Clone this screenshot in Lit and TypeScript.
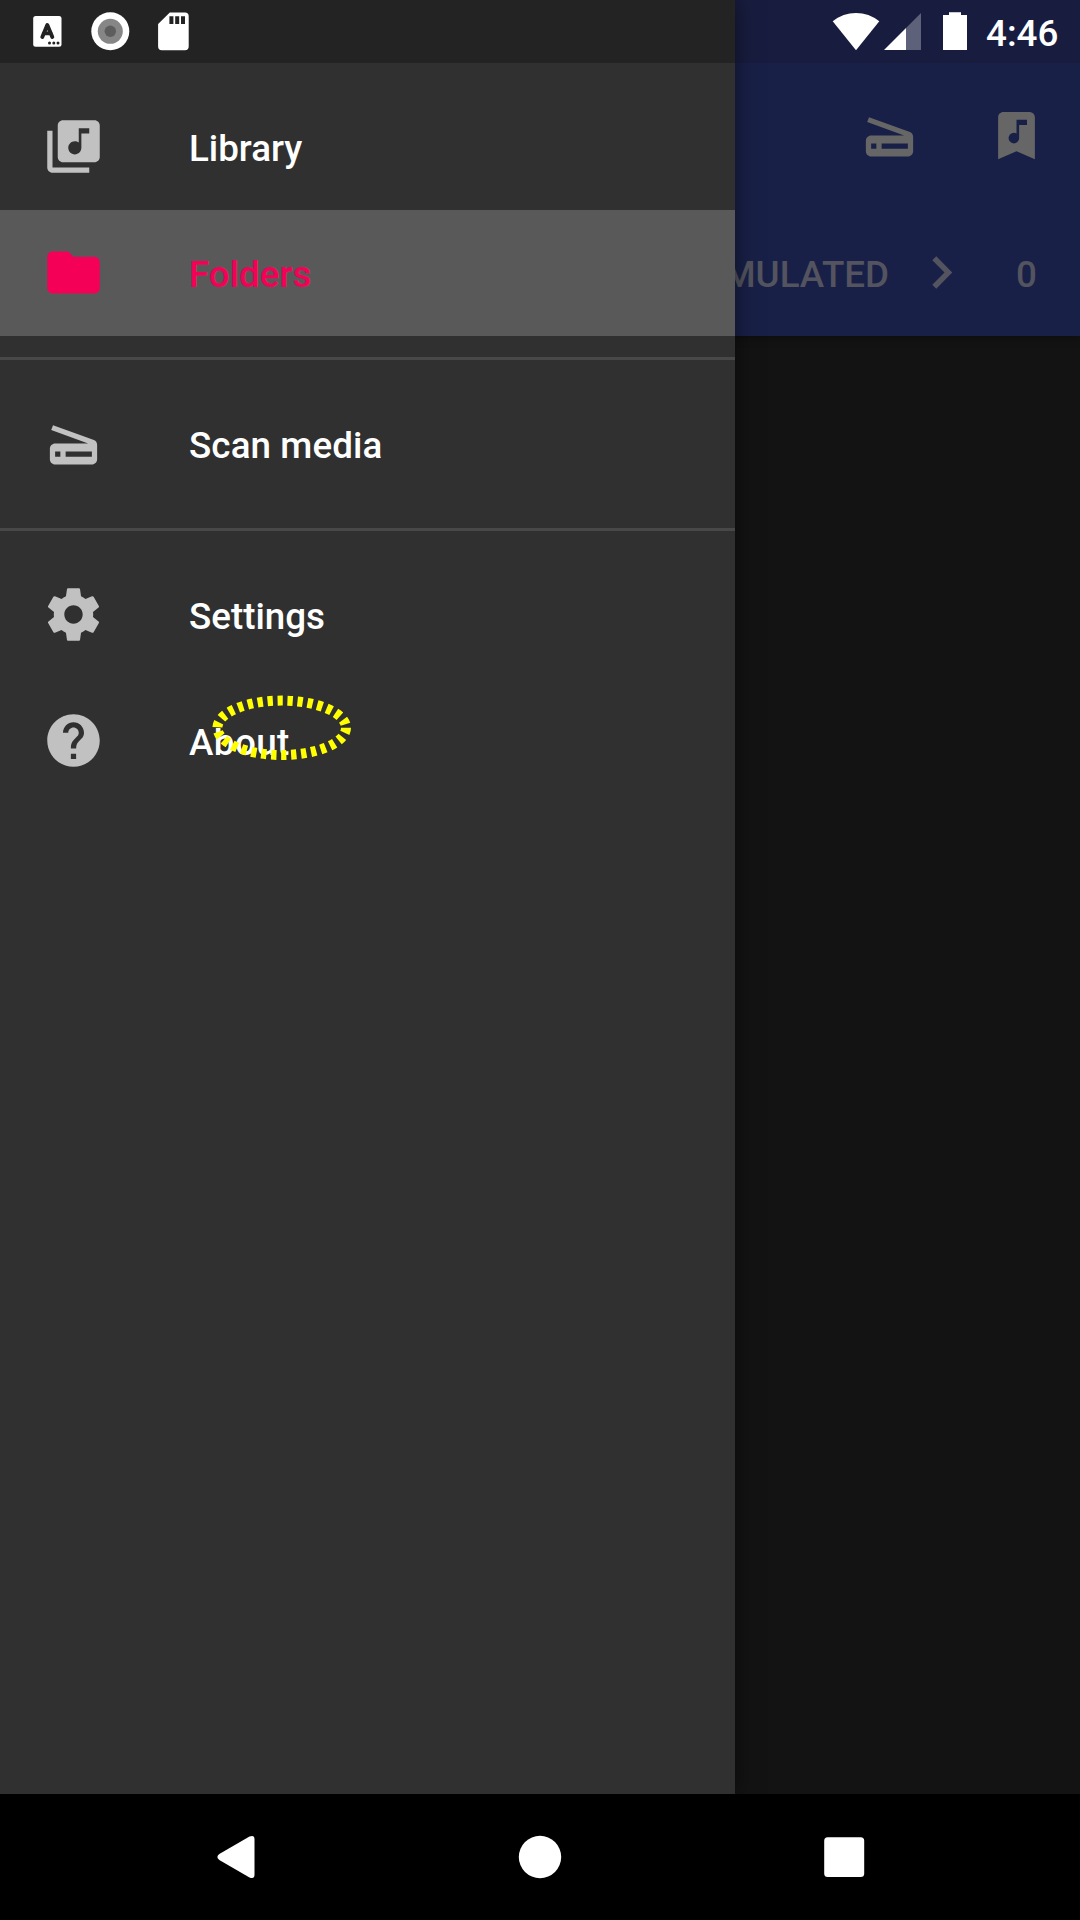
import { LitElement, html, css, svg } from "lit";
import { customElement, property } from "lit/decorators.js";

const ICONS: Record<string, string> = {
  library:
    "M20 2H8c-1.1 0-2 .9-2 2v12c0 1.1.9 2 2 2h12c1.1 0 2-.9 2-2V4c0-1.1-.9-2-2-2zm-2 5h-3v5.5c0 1.38-1.12 2.5-2.5 2.5S10 13.88 10 12.5s1.12-2.5 2.5-2.5c.57 0 1.08.19 1.5.51V5h4v2zM4 6H2v14c0 1.1.9 2 2 2h14v-2H4V6z",
  folder:
    "M10 4H4c-1.1 0-1.99.9-1.99 2L2 18c0 1.1.9 2 2 2h16c1.1 0 2-.9 2-2V8c0-1.1-.9-2-2-2h-8l-2-2z",
  scanner:
    "M19.8 10.7L4.2 5l-.7 1.9L17.6 12H5c-1.1 0-2 .9-2 2v4c0 1.1.9 2 2 2h14c1.1 0 2-.9 2-2v-5.5c0-.8-.5-1.6-1.2-1.8zM7 17H5v-2h2v2zm12 0H9v-2h10v2z",
  settings:
    "M19.43 12.98c.04-.32.07-.64.07-.98s-.03-.66-.07-.98l2.11-1.65c.19-.15.24-.42.12-.64l-2-3.46c-.12-.22-.39-.3-.61-.22l-2.49 1c-.52-.4-1.08-.73-1.69-.98l-.38-2.65C14.46 2.18 14.25 2 14 2h-4c-.25 0-.46.18-.49.42l-.38 2.65c-.61.25-1.17.59-1.69.98l-2.49-1c-.23-.09-.49 0-.61.22l-2 3.46c-.13.22-.07.49.12.64l2.11 1.65c-.04.32-.07.65-.07.98s.03.66.07.98l-2.11 1.65c-.19.15-.24.42-.12.64l2 3.46c.12.22.39.3.61.22l2.49-1c.52.4 1.08.73 1.69.98l.38 2.65c.03.24.24.42.49.42h4c.25 0 .46-.18.49-.42l.38-2.65c.61-.25 1.17-.59 1.69-.98l2.49 1c.23.09.49 0 .61-.22l2-3.46c.12-.22.07-.49-.12-.64l-2.11-1.65zM12 15.5c-1.93 0-3.5-1.57-3.5-3.5s1.57-3.5 3.5-3.5 3.5 1.57 3.5 3.5-1.57 3.5-3.5 3.5z",
  help:
    "M12 2C6.48 2 2 6.48 2 12s4.48 10 10 10 10-4.48 10-10S17.52 2 12 2zm1 17h-2v-2h2v2zm2.07-7.75l-.9.92C13.45 12.9 13 13.5 13 15h-2v-.5c0-1.1.45-2.1 1.17-2.83l1.24-1.26c.37-.36.59-.86.59-1.41 0-1.1-.9-2-2-2s-2 .9-2 2H8c0-2.21 1.79-4 4-4s4 1.79 4 4c0 .88-.36 1.68-.93 2.25z",
  bookmark:
    "M17 3a2 2 0 0 1 2 2v16l-7-3-7 3V5c0-1.1.9-2 2-2h10zM11 15a2 2 0 0 0 2-2V8h3V6h-4v5.27A2 2 0 1 0 11 15z",
  chevron: "M10 5.800L8.500 7.300 13.150 12l-4.650 4.700L10 18.200l6.100-6.200z",
};

@customElement("md-icon")
class MdIcon extends LitElement {
  @property() name = "";
  static styles = css`
    :host { display: block; width: 63px; height: 63px; flex: none; }
    svg { display: block; width: 100%; height: 100%; fill: currentColor; }
  `;
  render() {
    return html`<svg viewBox="0 0 24 24">${svg`<path fill-rule="evenodd" d=${ICONS[this.name]}></path>`}</svg>`;
  }
}

@customElement("status-bar")
class StatusBar extends LitElement {
  static styles = css`
    :host {
      display: flex; justify-content: space-between; height: 63px;
      color: #fff;
    }
    svg { display: block; flex: none; }
    .right { display: flex; }
    .time { width: 94px; font-size: 36.75px; line-height: 43px; padding-top: 12px; box-sizing: border-box; font-weight: 500; }
  `;
  render() {
    return html`
      <svg width="200" height="63" viewBox="0 0 200 63" fill="#fff">
        <rect x="33.2" y="16" width="28.3" height="30.7" rx="2.5"></rect>
        <path d="M42.300 36.900L47.300 25L52.300 36.900M43.600 33.400H51" fill="none" stroke="#232323" stroke-width="3.900" stroke-linecap="round" stroke-linejoin="round"></path>
        <g fill="#232323"><circle cx="49.5" cy="43.1" r="1.5"></circle><circle cx="53.8" cy="43.1" r="1.5"></circle><circle cx="58" cy="43.1" r="1.5"></circle></g>
        <circle cx="110.3" cy="31.3" r="19"></circle>
        <circle cx="110.3" cy="31.3" r="12.5" fill="#868686"></circle>
        <circle cx="110.3" cy="31.3" r="5.7" fill="#5d5d5d"></circle>
        <path d="M169.8 12.5H185a3.7 3.7 0 0 1 3.7 3.7V46.6a3.7 3.7 0 0 1-3.7 3.7H161.8a3.7 3.7 0 0 1-3.7-3.7V24z"></path>
        <path fill="#232323" d="M169.4 16.2h4v7.8h-4zM175.2 16.2h4v7.8h-4zM181 16.2h4v7.8h-4z"></path>
      </svg>
      <div class="right">
        <svg width="166" height="63" viewBox="820 0 166 63" fill="#fff">
          <path d="M832.7 21.3Q843 13 856 13T879.3 21.3L856 50.3z"></path>
          <path d="M921 13V50H906V28z" opacity=".3"></path>
          <path d="M906 28V50H884z"></path>
          <path d="M943 15H949V12.2H961V15H967V50H943z"></path>
        </svg>
        <div class="time">4:46</div>
      </div>`;
  }
}

@customElement("nav-item")
class NavItem extends LitElement {
  @property() icon = "";
  @property() label = "";
  @property({ type: Boolean, reflect: true }) selected = false;
  static styles = css`
    :host {
      display: flex; align-items: center; gap: 84px; height: 126px;
      padding-left: 42px; box-sizing: border-box;
      color: #fff; font-size: 36.75px; font-weight: 500; line-height: 43px;
    }
    .icon { color: #c1c1c1; margin-bottom: 1px; }
    .label { padding-top: 2px; }
    :host([selected]) { background: #595959; color: #f50057; }
    :host([selected]) .icon { color: #f50057; }
  `;
  render() {
    return html`<md-icon class="icon" name=${this.icon}></md-icon><span class="label">${this.label}</span>`;
  }
}

@customElement("app-root")
class AppRoot extends LitElement {
  static styles = css`
    :host {
      display: block; position: relative; width: 1080px; height: 1920px;
      overflow: hidden; font-family: Roboto, sans-serif;
    }
    .screen { display: flex; flex-direction: column; height: 100%; background: #131313; }
    .appbar { background: #192047; box-shadow: 0 2px 8px rgba(0,0,0,.35); }
    .appbar-top { height: 63px; background: #181d3f; }
    .actions { display: flex; justify-content: flex-end; gap: 64px; height: 147px; padding: 41px 32px 0 0; box-sizing: border-box; color: #666; }
    .crumbs {
      display: flex; justify-content: flex-end; align-items: center; height: 126px;
      padding-right: 43px; box-sizing: border-box;
      color: #53545f; font-size: 36.75px; font-weight: 500; line-height: 43px;
    }
    .crumb { padding-top: 2px; }
    .chevron { margin: 0 43px 2px 21px; }
    .content { flex: 1; }
    .navbar { position: relative; z-index: 2; height: 126px; background: #000; }
    .navbar svg { display: block; }
    .drawer {
      position: absolute; left: 0; top: 0; width: 735px; height: 1794px;
      background: #303030; box-shadow: 0 0 22px rgba(0,0,0,.5);
    }
    .drawer-top { height: 63px; background: #232323; margin-bottom: 21px; }
    .divider { height: 3px; background: #484848; margin: 21px 0; }
    .scan { letter-spacing: .1px; }
    .about { letter-spacing: .45px; }
    .status { position: absolute; left: 0; top: 0; width: 1080px; }
    .marker { position: absolute; left: 205px; top: 690px; }
  `;
  render() {
    return html`
      <div class="screen">
        <div class="appbar">
          <div class="appbar-top"></div>
          <div class="actions">
            <md-icon name="scanner"></md-icon>
            <md-icon name="bookmark"></md-icon>
          </div>
          <div class="crumbs">
            <span class="crumb">EMULATED</span>
            <md-icon class="chevron" name="chevron"></md-icon>
            <span class="crumb">0</span>
          </div>
        </div>
        <div class="content"></div>
        <div class="navbar">
          <svg width="1080" height="126" viewBox="0 0 1080 126" fill="#fff">
            <path d="M219.3 60L249.5 42.6Q254.3 40.5 254.5 45V81Q254.3 85.5 249.5 83.4L219.3 66Q215.5 63 219.3 60z"></path>
            <circle cx="540" cy="63" r="21.2"></circle>
            <rect x="824.2" y="43.2" width="40" height="39.8" rx="3.5"></rect>
          </svg>
        </div>
      </div>
      <div class="drawer">
        <div class="drawer-top"></div>
        <nav-item icon="library" label="Library"></nav-item>
        <nav-item icon="folder" label="Folders" selected></nav-item>
        <div class="divider"></div>
        <nav-item class="scan" icon="scanner" label="Scan media"></nav-item>
        <div class="divider"></div>
        <nav-item icon="settings" label="Settings"></nav-item>
        <nav-item class="about" icon="help" label="About"></nav-item>
      </div>
      <status-bar class="status"></status-bar>
      <svg class="marker" width="150" height="75" viewBox="205 690 150 75">
        <ellipse cx="281.7" cy="727.8" rx="64.3" ry="27.2" fill="none" stroke="#ff0" stroke-width="10" stroke-dasharray="5.3 4.7"></ellipse>
      </svg>`;
  }
}
